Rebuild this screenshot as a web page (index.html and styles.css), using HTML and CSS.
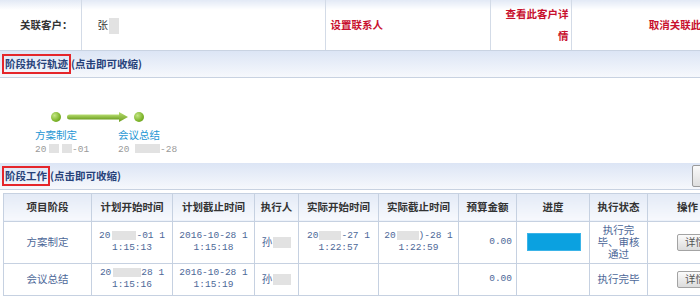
FILE: index.html
```html
<!DOCTYPE html>
<html lang="zh-CN">
<head>
  <meta charset="UTF-8">
  <title>项目阶段</title>
  <link rel="stylesheet" href="styles.css">
</head>
<body>
  <div class="page">

    <table class="relate">
      <tr>
        <th class="label">关联客户：</th>
        <td class="cust">张<span class="blur b-name"></span></td>
        <td class="act">设置联系人</td>
        <td class="act detail">查看此客户详情</td>
        <td class="act cancel">取消关联此客户</td>
      </tr>
    </table>

    <!-- 阶段执行轨迹 -->
    <div class="bar">
      <span class="mark">阶段执行轨迹</span>(点击即可收缩)
    </div>

    <div class="track">
      <div class="dots">
        <span class="dot"></span>
        <svg class="arrow" width="62" height="12" viewBox="0 0 62 12">
          <defs>
            <linearGradient id="arrowGrad" x1="0" y1="0" x2="0" y2="1">
              <stop offset="0" stop-color="#b6dd6e"/>
              <stop offset="1" stop-color="#6e9f22"/>
            </linearGradient>
          </defs>
          <rect x="0" y="3.5" width="54" height="5" rx="2.5" fill="url(#arrowGrad)"/>
          <polygon points="52,1 61,6 52,11" fill="url(#arrowGrad)"/>
        </svg>
        <span class="dot"></span>
      </div>
      <div class="steps">
        <div class="step">
          <div class="step-name">方案制定</div>
          <div class="step-date">20<span class="blur b-d1"></span> <span class="blur b-d2"></span>-01</div>
        </div>
        <div class="step">
          <div class="step-name">会议总结</div>
          <div class="step-date">20 <span class="blur b-d3"></span>-28</div>
        </div>
      </div>
    </div>

    <!-- 阶段工作 -->
    <div class="bar">
      <span class="mark">阶段工作</span>(点击即可收缩)
      <span class="bar-btn"></span>
    </div>

    <table class="work">
      <colgroup>
        <col style="width:88px">
        <col style="width:81px">
        <col style="width:82px">
        <col style="width:44px">
        <col style="width:80px">
        <col style="width:80px">
        <col style="width:58px">
        <col style="width:73px">
        <col style="width:58px">
        <col style="width:80px">
      </colgroup>
      <tr>
        <th>项目阶段</th>
        <th>计划开始时间</th>
        <th>计划截止时间</th>
        <th>执行人</th>
        <th>实际开始时间</th>
        <th>实际截止时间</th>
        <th>预算金额</th>
        <th>进度</th>
        <th>执行状态</th>
        <th>操作</th>
      </tr>
      <tr class="row-1">
        <td>方案制定</td>
        <td class="num">20<span class="blur b-t"></span>-01 1<br>1:15:13</td>
        <td class="num">2016-10-28 1<br>1:15:18</td>
        <td>孙<span class="blur b-user"></span></td>
        <td class="num">20<span class="blur b-t2"></span>-27 1<br>1:22:57</td>
        <td class="num">20<span class="blur b-t3"></span>)-28 1<br>1:22:59</td>
        <td class="num money">0.00</td>
        <td><div class="progress"></div></td>
        <td class="state">执行完毕、审核通过</td>
        <td><button class="btn">详情</button></td>
      </tr>
      <tr class="row-2">
        <td>会议总结</td>
        <td class="num">20<span class="blur b-t4"></span>28 1<br>1:15:16</td>
        <td class="num">2016-10-28 1<br>1:15:19</td>
        <td>孙<span class="blur b-user"></span></td>
        <td></td>
        <td></td>
        <td class="num money">0.00</td>
        <td></td>
        <td>执行完毕</td>
        <td><button class="btn">详情</button></td>
      </tr>
    </table>

  </div>
</body>
</html>
```

FILE: styles.css
```css
body {
  margin: 0;
  background: #fff;
  font-family: "Noto Sans CJK SC", "DejaVu Sans", sans-serif;
  font-size: 10.5px;
  overflow: hidden;
}

.page {
  width: 734px;
}

/* top relation row */
.relate {
  width: 800px;
  border-collapse: collapse;
  table-layout: fixed;
}

.relate th,
.relate td {
  height: 50px;
  padding: 0 5px;
  border-right: 1px solid #d3dbe7;
  border-bottom: 1px solid #c9d3e2;
  background: linear-gradient(#e2e9f5, #fff 10px);
  font-weight: bold;
  line-height: 22px;
  box-sizing: border-box;
}

.relate .label {
  width: 81px;
  text-align: right;
  padding-right: 8px;
  color: #333;
}

.relate .cust {
  width: 244px;
  padding-left: 16px;
  color: #333;
  font-weight: normal;
}

.relate .act {
  width: 165px;
  color: #c8102e;
}

.relate .detail {
  width: 81px;
  text-align: right;
  padding-right: 2px;
}

.relate .cancel {
  width: 229px;
  text-align: center;
}

/* section bar */
.bar {
  display: flex;
  align-items: center;
  height: 26px;
  padding-left: 4px;
  border-bottom: 1px solid #c8d2e1;
  background: linear-gradient(#dce5f5, #f6f8fc);
  color: #27427a;
  font-weight: bold;
}

.mark {
  margin-left: -2px;
  padding: 0 1px;
  line-height: 16px;
  border: 2px solid #e5262b;
}

.bar-btn {
  margin-left: auto;
  width: 40px;
  height: 20px;
  border: 1px solid #9a9a9a;
  border-radius: 2px;
  background: linear-gradient(#fafafa, #dedede);
}

/* track */
.track {
  height: 85px;
}

.dots {
  display: flex;
  align-items: center;
  padding: 33px 0 0 51px;
}

.dot {
  width: 10px;
  height: 10px;
  border-radius: 50%;
  background: radial-gradient(circle at 35% 35%, #c4e684, #7db42a 60%, #5e9218);
}

.arrow {
  margin: 0 5px 0 6px;
}

.steps {
  display: flex;
  padding: 5px 0 0 35px;
}

.step {
  width: 83px;
}

.step-name {
  color: #1d96d4;
  line-height: 14px;
}

.step-date {
  margin-top: 1px;
  font-family: "Liberation Mono", monospace;
  font-size: 9.5px;
  color: #9a9a9a;
  line-height: 13px;
}

.blur {
  display: inline-block;
  vertical-align: middle;
  height: 9px;
  background: #e2e2e2;
  filter: blur(0.6px);
}

.b-name { width: 10px; height: 16px; margin-left: 1px; }
.b-d1 { width: 10px; margin-left: 3px; }
.b-d2 { width: 10px; margin-left: -3px; }
.b-d3 { width: 25px; }
.b-t { width: 24px; margin-left: 2px; }
.b-t2 { width: 22px; margin-left: 1px; }
.b-t3 { width: 22px; margin-left: 1px; }
.b-t4 { width: 28px; margin-left: 2px; }
.b-user { width: 18px; height: 11px; margin-left: 1px; }

/* work table */
.work {
  margin: 3px 0 0 3px;
  width: 719px;
  border-collapse: collapse;
  table-layout: fixed;
}

.work th,
.work td {
  border: 1px solid #c6d1e1;
  padding: 0 3px;
  text-align: center;
  line-height: 12px;
  color: #4d6898;
}

.work th {
  height: 27px;
  background: linear-gradient(#e3eaf6, #f7f9fd);
  color: #333;
  font-weight: bold;
}

.work .row-1 td {
  height: 41px;
}

.work .row-2 td {
  height: 31px;
}

.num {
  font-family: "Liberation Mono", monospace;
  font-size: 9.5px;
}

.work .money {
  text-align: right;
  padding-right: 4px;
}

.progress {
  width: 52px;
  height: 16px;
  margin-left: 7px;
  background: #0ba1e0;
  border: 1px solid #3bb4e8;
}

.btn {
  margin-left: 16px;
  padding: 0 7px;
  height: 17px;
  border: 1px solid #a3a3a3;
  border-radius: 2px;
  background: linear-gradient(#fbfbfb, #dcdcdc);
  font-family: "Noto Sans CJK SC", sans-serif;
  font-size: 10.5px;
  color: #555;
  line-height: 14px;
}
```
